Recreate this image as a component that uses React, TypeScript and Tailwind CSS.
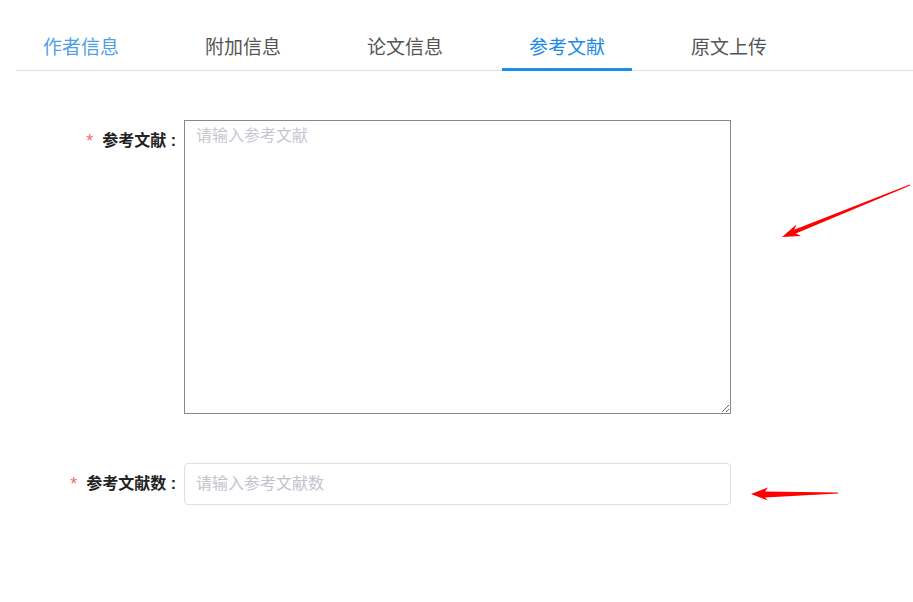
import React from "react";

const tabs = ["作者信息", "附加信息", "论文信息", "参考文献", "原文上传"];

const font = {
  fontFamily: '"Liberation Sans", "Noto Sans CJK SC", sans-serif',
};

const Arrows: React.FC = () => (
  <svg
    className="absolute left-0 top-0 pointer-events-none"
    width="913"
    height="602"
    viewBox="0 0 913 602"
  >
    <polygon
      fill="#ff0000"
      points="782,237 801,236 795.8,233.6 910.2,185.4 909.8,184.6 794.2,229.8 796.4,224.6"
    />
    <polygon
      fill="#ff0000"
      points="751,494 768,487.5 765,491.5 838,492.6 838,493.6 765,497.5 768,500.5"
    />
  </svg>
);

const App: React.FC = () => {
  const active = 3;
  return (
    <div className="relative w-[913px] h-[602px] bg-white overflow-hidden" style={font}>
      <div className="pt-[24px] pl-[16px]">
        <div className="flex gap-[32px] h-[47px] border-b border-[#dcdfe6]">
          {tabs.map((t, i) => (
            <div
              key={t}
              className={
                "w-[130px] flex items-center justify-center pt-[3px] text-[19px] relative " +
                (i === active
                  ? "text-[#1f8be6]"
                  : i === 0
                  ? "text-[#4f9fe6]"
                  : "text-[#555555]")
              }
            >
              {t}
              {i === active && (
                <div className="absolute left-0 right-0 bottom-[-1px] h-[3px] bg-[#1a8fe6]" />
              )}
            </div>
          ))}
        </div>
      </div>

      <div className="mt-[49px] flex flex-col gap-[49px]">
        <div className="flex">
          <div className="w-[184px] pr-[8px] h-[42px] flex items-center justify-end text-[16px] font-bold text-[#222]">
            <span className="text-[#f56c6c] mr-[9px] text-[18px] font-normal">*</span>
            参考文献 :
          </div>
          <textarea
            className="w-[547px] h-[294px] border border-[#888888] px-[11px] py-[3px] text-[16px] leading-[24px] outline-none resize-y placeholder:text-[#c5c8ce]"
            style={font}
            placeholder="请输入参考文献"
          />
        </div>
        <div className="flex">
          <div className="w-[184px] pr-[8px] h-[42px] flex items-center justify-end text-[16px] font-bold text-[#222]">
            <span className="text-[#f56c6c] mr-[9px] text-[18px] font-normal">*</span>
            参考文献数 :
          </div>
          <input
            className="w-[547px] h-[42px] border border-[#dcdfe6] rounded-[4px] px-[11px] text-[16px] outline-none placeholder:text-[#c0c4cc]"
            style={font}
            placeholder="请输入参考文献数"
          />
        </div>
      </div>
      <Arrows />
    </div>
  );
};

export default App;
